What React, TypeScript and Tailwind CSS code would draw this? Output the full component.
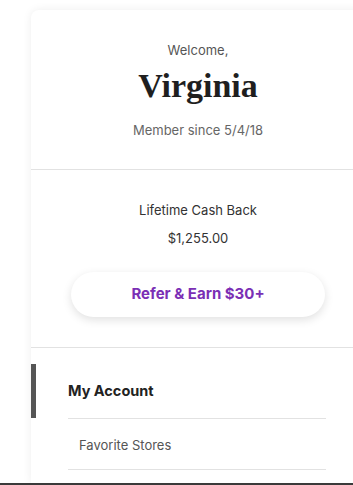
import React from "react";

export default function App() {
  const sans = { fontFamily: "Inter, 'Open Sans', sans-serif" };
  return (
    <div className="h-[485px] w-[353px] bg-white overflow-hidden flex flex-col" style={sans}>
      <div className="flex-1 pt-[10px] pl-[31px] overflow-hidden">
        <div className="w-[334px] h-full bg-white rounded-tl-[8px] rounded-tr-[8px] shadow-[0_0_10px_rgba(0,0,0,0.07)] flex flex-col">
          <div className="h-[160px] flex flex-col items-center pt-[31px] border-b border-[#e2e2e2]">
            <div className="text-[13px] leading-[18px] text-[#555]">Welcome,</div>
            <div
              className="mt-[7px] text-[34px] leading-[40px] font-bold text-[#1f1f1f]"
              style={{ fontFamily: "'Liberation Serif', 'DejaVu Serif', serif" }}
            >
              Virginia
            </div>
            <div className="mt-[15px] text-[13px] leading-[18px] text-[#666]">Member since 5/4/18</div>
          </div>
          <div className="h-[178px] flex flex-col items-center pt-[31px] border-b border-[#e2e2e2]">
            <div className="text-[13px] leading-[18px] text-[#333]">Lifetime Cash Back</div>
            <div className="mt-[10px] text-[13px] leading-[18px] text-[#333]">$1,255.00</div>
            <div className="mt-[25px] w-[254px] h-[45px] rounded-full bg-white shadow-[0_3px_10px_rgba(0,0,0,0.12)] flex items-center justify-center text-[15px] font-bold text-[#7b2fb5]">
              Refer &amp; Earn $30+
            </div>
          </div>
          <div className="pt-[16px]">
            <div className="flex h-[55px]">
              <div className="w-[5px] h-[54px] bg-[#555]" />
              <div className="ml-[32px] w-[258px] flex items-center border-b border-[#e2e2e2] text-[14.5px] font-bold text-[#222]">
                My Account
              </div>
            </div>
            <div className="ml-[37px] w-[258px] h-[51px] flex items-center pl-[11px] pt-[3px] border-b border-[#e2e2e2] text-[13px] text-[#555]">
              Favorite Stores
            </div>
          </div>
        </div>
      </div>
      <div className="h-[2px] bg-[#3a3a3a]" />
    </div>
  );
}
